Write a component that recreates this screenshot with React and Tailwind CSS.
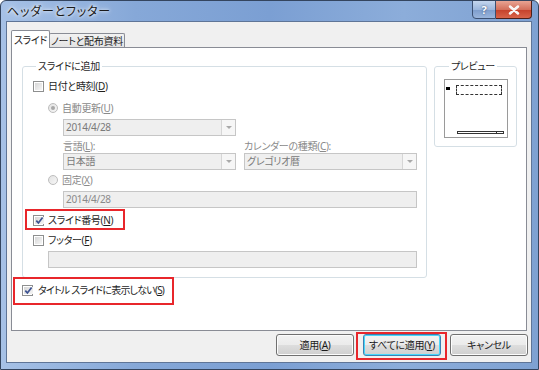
import React from "react";

function Checkbox({ checked }) {
  return (
    <span className="w-[11px] h-[11px] border border-[#8e8f8f] bg-white p-[1px] shrink-0 flex">
      <span className="flex-1 bg-[linear-gradient(135deg,#d6d6d6,#f6f6f6)] flex items-center justify-center">
        {checked && (
          <svg width="9" height="9" viewBox="0 0 9 9">
            <path d="M1.3 4.6 L3.4 6.9 L7.6 1.4" stroke="#3d5392" strokeWidth="1.7" fill="none" />
          </svg>
        )}
      </span>
    </span>
  );
}

function Radio({ checked }) {
  return (
    <span className="w-[10px] h-[10px] rounded-full border border-[#bdbdbd] bg-[linear-gradient(135deg,#e2e2e2,#f7f7f7)] shrink-0 flex items-center justify-center">
      {checked && <span className="w-[4px] h-[4px] rounded-full bg-[#a8a8a8]" />}
    </span>
  );
}

function Combo({ value, className }) {
  return (
    <div className={"h-[17px] border border-[#c6c6c6] bg-[#efefef] flex items-center " + className}>
      <span className="flex-1 pl-[2px] text-[#7a7a7a] leading-[15px]">{value}</span>
      <span className="w-[14px] h-[15px] border-l border-[#d6d6d6] bg-[#f6f6f6] flex items-center justify-center">
        <svg width="6" height="4" viewBox="0 0 6 4">
          <path d="M0 0 H6 L3 3 Z" fill="#a9a9a9" />
        </svg>
      </span>
    </div>
  );
}

function Button({ children, focused }) {
  return (
    <div
      className={
        "w-[78px] h-[22px] rounded-[3px] border flex items-center justify-center text-[#1b1b1b] bg-[linear-gradient(#f2f2f2,#ebebeb_50%,#dddddd_51%,#cfcfcf)] " +
        (focused
          ? "border-[#3c7fb1] shadow-[inset_0_0_0_1px_#48d7fb]"
          : "border-[#707070] shadow-[inset_0_0_0_1px_#fcfcfc]")
      }
    >
      {children}
    </div>
  );
}

export default function App() {
  return (
    <div className="w-[539px] h-[370px] relative overflow-hidden border border-[#34455f] rounded-t-[6px] bg-[linear-gradient(90deg,#a6c1e6_0%,#86a8d8_25%,#7b9fd3_50%,#8cadda_75%,#7ea1d2_100%)] font-['Noto_Sans','Noto_Sans_CJK_JP',sans-serif] [font-feature-settings:'palt'] text-[10px] tracking-[-0.3px] leading-[14px] text-[#1e1e1e] whitespace-nowrap">
      {/* title bar */}
      <div className="h-[20px] flex items-start">
        <div className="pl-[6px] pt-[3px] text-[12px] tracking-[0.8px] leading-[16px] text-[#1a1a1a] [text-shadow:0_0_6px_#ffffff,0_0_3px_#ffffff]">
          ヘッダーとフッター
        </div>
        <div className="ml-auto mr-[6px] flex h-[19px] -mt-[1px]">
          <div className="w-[24px] h-[19px] border border-[#3b5072] rounded-bl-[4px] bg-[linear-gradient(#c4d6ee,#9cb7dd_50%,#7c9ccc_51%,#9ab5dc)] flex items-center justify-center text-white text-[11px] font-bold [text-shadow:0_0_2px_#233a5e]">
            ?
          </div>
          <div className="w-[36px] h-[19px] border border-l-0 border-[#4b1f1a] rounded-br-[4px] bg-[linear-gradient(#e8a493,#d3705c_50%,#c4402a_51%,#d8644a)] flex items-center justify-center">
            <svg width="12" height="10" viewBox="0 0 12 10">
              <path d="M2 1.5 L10 8.5 M10 1.5 L2 8.5" stroke="#ffffff" strokeWidth="2.4" strokeLinecap="round" />
              <path d="M2 1.5 L10 8.5 M10 1.5 L2 8.5" stroke="#f4f4f4" strokeWidth="1.4" strokeLinecap="round" />
            </svg>
          </div>
        </div>
      </div>

      {/* client area */}
      <div className="ml-[5px] w-[526px] h-[342px] border border-[#5f7597] bg-[#f0f0f0] flex flex-col">
        {/* tabs */}
        <div className="pl-[4px] pt-[8px] flex items-end h-[25px]">
          <div className="relative z-10 -mb-[1px] w-[39px] h-[18px] border border-b-0 border-[#898c95] rounded-t-[2px] bg-white flex items-start justify-center pt-[2px]">
            スライド
          </div>
          <div className="-ml-[1px] w-[76px] h-[14px] border border-b-0 border-[#898c95] rounded-t-[2px] bg-[linear-gradient(#f2f2f2,#e3e3e3)] flex items-center justify-center">
            ノートと配布資料
          </div>
        </div>

        {/* panel */}
        <div className="ml-[4px] w-[516px] h-[284px] border border-[#898c95] bg-white pt-[12px] pl-[10px]">
          <div className="flex gap-[7px] items-start">
            {/* group スライドに追加 */}
            <fieldset className="w-[405px] h-[218px] border border-[#d5dfe5] rounded-[3px] pl-[10px]">
              <legend className="ml-[3px] px-[2px] leading-[12px]">スライドに追加</legend>

              <div className="mt-[7px] h-[14px] flex items-center">
                <Checkbox />
                <span className="ml-[4px]">
                  日付と時刻(<span className="underline">D</span>)
                </span>
              </div>

              <div className="mt-[8px] h-[14px] flex items-center pl-[15px] text-[#8a8a8a]">
                <Radio checked />
                <span className="ml-[4px]">
                  自動更新(<span className="underline">U</span>)
                </span>
              </div>

              <div className="mt-[4px] pl-[30px]">
                <Combo value="2014/4/28" className="w-[173px]" />
              </div>

              <div className="mt-[3px] h-[14px] flex pl-[30px] text-[#8a8a8a]">
                <span className="w-[181px]">
                  言語(<span className="underline">L</span>):
                </span>
                <span>
                  カレンダーの種類(<span className="underline">C</span>):
                </span>
              </div>

              <div className="h-[17px] flex gap-[8px] pl-[30px]">
                <Combo value="日本語" className="w-[173px]" />
                <Combo value="グレゴリオ暦" className="w-[173px]" />
              </div>

              <div className="mt-[3px] h-[14px] flex items-center pl-[15px] text-[#8a8a8a]">
                <Radio />
                <span className="ml-[4px]">
                  固定(<span className="underline">X</span>)
                </span>
              </div>

              <div className="mt-[4px] ml-[30px] w-[354px] h-[17px] border border-[#c6c6c6] bg-[#efefef] pl-[2px] text-[#8a8a8a] leading-[15px]">
                2014/4/28
              </div>

              <div className="mt-[5px] h-[14px] flex items-center">
                <Checkbox checked />
                <span className="ml-[4px]">
                  スライド番号(<span className="underline">N</span>)
                </span>
              </div>

              <div className="mt-[6px] h-[14px] flex items-center">
                <Checkbox />
                <span className="ml-[4px]">
                  フッター(<span className="underline">F</span>)
                </span>
              </div>

              <div className="mt-[4px] ml-[15px] w-[369px] h-[17px] border border-[#c6c6c6] bg-[#efefef]" />
            </fieldset>

            {/* preview */}
            <fieldset className="w-[83px] h-[87px] border border-[#d5dfe5] rounded-[3px] pl-[9px]">
              <legend className="ml-[5px] px-[2px] leading-[12px]">プレビュー</legend>
              <div className="mt-[7px] w-[64px] h-[59px] border border-[#9a9a9a] bg-white flex flex-col">
                <div className="flex items-start mt-[5px]">
                  <span className="ml-[1px] mt-[2px] w-[4px] h-[3px] bg-black" />
                  <span className="ml-[6px] w-[46px] h-[10px] border border-dashed border-[#333]" />
                </div>
                <div className="mt-auto mb-[3px] ml-[12px] flex">
                  <span className="w-[40px] h-[3px] border border-[#333]" />
                  <span className="w-[7px] h-[3px] border border-l-0 border-[#333]" />
                </div>
              </div>
            </fieldset>
          </div>

          <div className="mt-[5px] h-[14px] flex items-center">
            <Checkbox checked />
            <span className="ml-[5px] tracking-[-0.8px]">
              タイトル スライドに表示しない(<span className="underline">S</span>)
            </span>
          </div>
        </div>

        {/* buttons */}
        <div className="mt-[3px] pr-[3px] flex justify-end gap-[9px]">
          <Button>
            適用(<span className="underline">A</span>)
          </Button>
          <Button focused>
            すべてに適用(<span className="underline">Y</span>)
          </Button>
          <Button>キャンセル</Button>
        </div>
      </div>

      {/* annotations */}
      <div className="absolute left-[24px] top-[208px] w-[100px] h-[21px] border-2 border-[#e8262b]" />
      <div className="absolute left-[12px] top-[276px] w-[161px] h-[28px] border-2 border-[#e8262b]" />
      <div className="absolute left-[355px] top-[331px] w-[91px] h-[28px] border-2 border-[#e8262b]" />
    </div>
  );
}
